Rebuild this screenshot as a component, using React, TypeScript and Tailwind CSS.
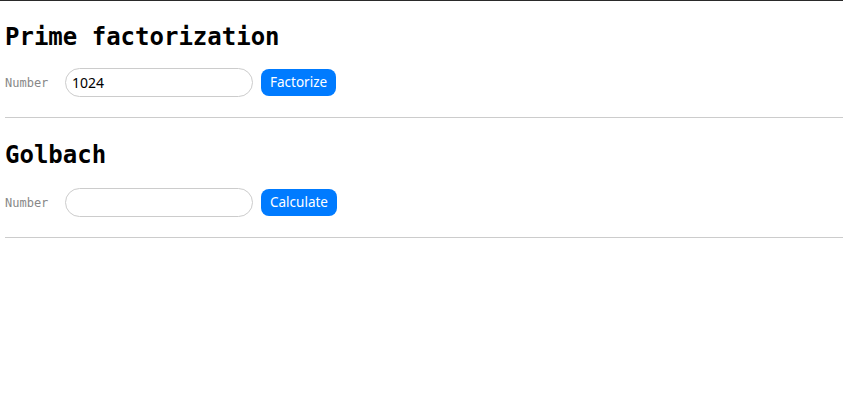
import React from "react";

function Section({
  title,
  value,
  button,
  second,
}: {
  title: string;
  value: string;
  button: string;
  second?: boolean;
}) {
  return (
    <section className="border-b border-[#cccccc] ml-[5px]">
      <h2
        className={
          (second ? "pt-[23px]" : "pt-[22px]") +
          " font-['DejaVu_Sans_Mono',monospace] text-[24px] leading-[28px] font-bold text-black"
        }
      >
        {title}
      </h2>
      <div className={(second ? "mt-[18px] mb-[20px]" : "mt-[16px] mb-[20px]") + " flex items-center h-[30px]"}>
        <label className="w-[60px] pt-[2px] font-['DejaVu_Sans_Mono',monospace] text-[12px] text-[#888888]">Number</label>
        <input
          defaultValue={value}
          className="w-[188px] h-[29px] rounded-full border border-[#cccccc] px-[6px] font-['Noto_Sans',sans-serif] text-[14px] text-black outline-none"
        />
        <button className="ml-[8px] h-[27px] px-[9px] rounded-[8px] bg-[#007bff] text-white font-['Noto_Sans',sans-serif] text-[13.5px]">
          {button}
        </button>
      </div>
    </section>
  );
}

export default function App() {
  return (
    <div className="min-h-[410px] bg-white border-t border-[#2a2a2a]">
      <Section title="Prime factorization" value="1024" button="Factorize" />
      <Section title="Golbach" value="" button="Calculate" second />
    </div>
  );
}
